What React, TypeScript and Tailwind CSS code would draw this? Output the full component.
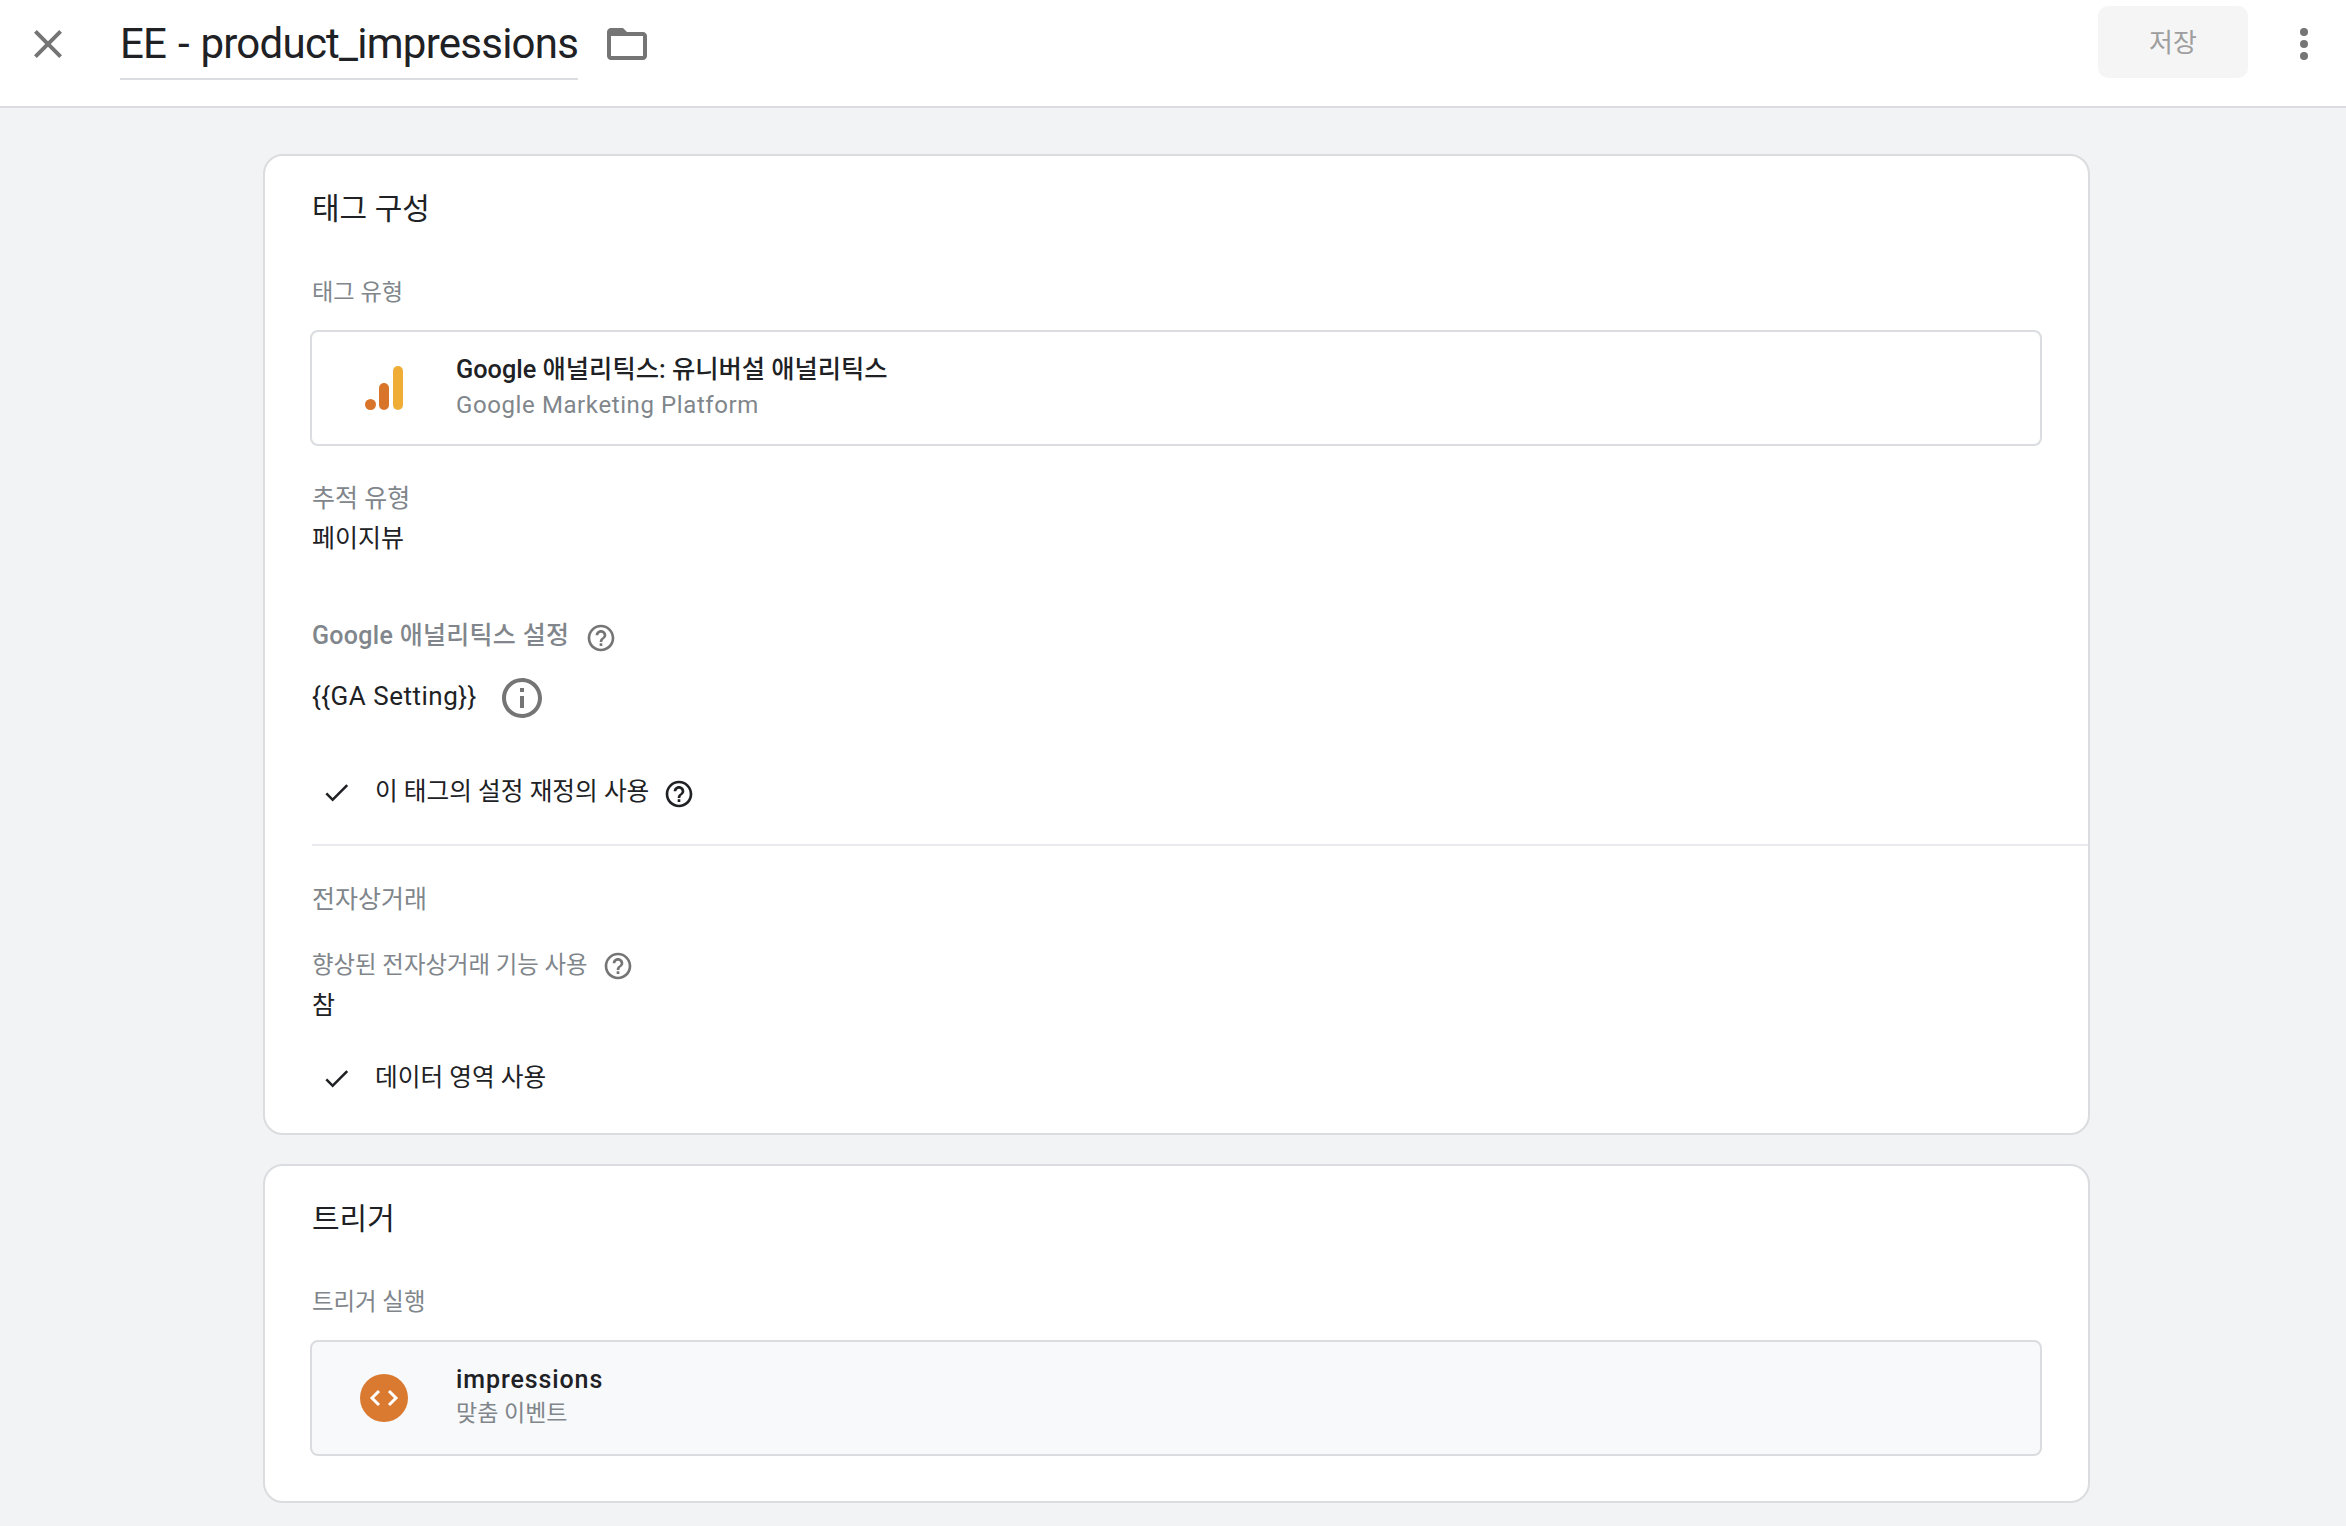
import type { ReactNode } from 'react'

const HELP = 'M11 18h2v-2h-2v2zm1-16C6.48 2 2 6.48 2 12s4.48 10 10 10 10-4.48 10-10S17.52 2 12 2zm0 18c-4.41 0-8-3.59-8-8s3.59-8 8-8 8 3.59 8 8-3.59 8-8 8zm0-14c-2.21 0-4 1.79-4 4h2c0-1.1.9-2 2-2s2 .9 2 2c0 2-3 1.75-3 5h2c0-2.25 3-2.5 3-5 0-2.21-1.79-4-4-4z'
const INFO = 'M11 7h2v2h-2zm0 4h2v6h-2zm1-9C6.48 2 2 6.48 2 12s4.48 10 10 10 10-4.48 10-10S17.52 2 12 2zm0 18c-4.41 0-8-3.59-8-8s3.59-8 8-8 8 3.59 8 8-3.59 8-8 8z'
const CLOSE = 'M19 6.41L17.59 5 12 10.59 6.41 5 5 6.41 10.59 12 5 17.59 6.41 19 12 13.41 17.59 19 19 17.59 13.41 12z'
const FOLDER = 'M20 6h-8l-2-2H4c-1.1 0-2 .9-2 2v12c0 1.1.9 2 2 2h16c1.1 0 2-.9 2-2V8c0-1.1-.9-2-2-2zm0 12H4V8h16v10z'
const CHECK = 'M9 16.17L4.83 12l-1.41 1.41L9 19 21 7l-1.41-1.41z'

function Icon({ d, className }: { d: string; className: string }) {
  return (
    <svg viewBox="0 0 24 24" fill="currentColor" className={className}>
      <path d={d} />
    </svg>
  )
}

function Label({ children, className }: { children: ReactNode; className: string }) {
  return <div className={`h-[30px] flex items-center text-[#80868b] ${className}`}>{children}</div>
}

function Value({ children, className }: { children: ReactNode; className: string }) {
  return <div className={`h-[30px] flex items-center text-[25px] text-[#202124] ${className}`}>{children}</div>
}

function CardTitle({ children }: { children: ReactNode }) {
  return <div className="h-[40px] flex items-center text-[30px] text-[#202124]">{children}</div>
}

function CheckRow({ children, className }: { children: ReactNode; className: string }) {
  return (
    <div className={`h-[40px] flex items-center text-[24.7px] text-[#202124] ${className}`}>
      <Icon d={CHECK} className="w-[31px] h-[31px] ml-[9px] mr-[23px] shrink-0 text-[#202124]" />
      {children}
    </div>
  )
}

function Box({ icon, title, sub, className, bodyClass, titleClass, subClass }: { icon: ReactNode; title: string; sub: string; className: string; bodyClass: string; titleClass: string; subClass: string }) {
  return (
    <div className={`h-[116px] ml-[-2px] rounded-[8px] border-2 border-[#dadce0] flex items-center ${className}`}>
      <div className="w-[144px] flex justify-center shrink-0">{icon}</div>
      <div className={`flex flex-col ${bodyClass}`}>
        <div className={`h-[34px] flex items-center font-medium text-[#202124] ${titleClass}`}>{title}</div>
        <div className={`h-[32px] flex items-center text-[#80868b] ${subClass}`}>{sub}</div>
      </div>
    </div>
  )
}

export default function App() {
  return (
    <div className="min-h-[1526px] bg-[#f1f3f4] font-[Roboto,'Noto_Sans_CJK_KR',sans-serif] overflow-hidden">
      <header className="h-[108px] bg-white border-b-2 border-[#dadce0] flex items-center pb-[18px]">
        <Icon d={CLOSE} className="w-[48px] h-[48px] ml-[24px] mr-[48px] text-[#757575] shrink-0" />
        <div className="h-[72px] border-b-2 border-[#dadce0] flex items-center text-[42px] tracking-[-0.75px] [word-spacing:2px] text-[#202124]">
          EE - product_impressions
        </div>
        <Icon d={FOLDER} className="w-[48px] h-[48px] ml-[25px] text-[#757575] shrink-0" />
        <div className="ml-auto mb-[4px] pt-[3px] w-[150px] h-[72px] rounded-[10px] bg-[#f5f5f5] flex items-center justify-center text-[26px] text-[#9e9e9e]">
          저장
        </div>
        <div className="w-[98px] pl-[14px] flex flex-col items-center gap-[4px]">
          <span className="w-[8px] h-[8px] rounded-full bg-[#757575]" />
          <span className="w-[8px] h-[8px] rounded-full bg-[#757575]" />
          <span className="w-[8px] h-[8px] rounded-full bg-[#757575]" />
        </div>
      </header>

      <main className="ml-[263px] w-[1827px] pt-[46px]">
        <section className="h-[981px] bg-white border-2 border-[#dadce0] rounded-[20px] pl-[47px] pr-[46px] pt-[32px]">
          <CardTitle>태그 구성</CardTitle>
          <Label className="mt-[49px] text-[23.2px]">태그 유형</Label>
          <Box
            className="mt-[23px] bg-white"
            bodyClass="gap-[2px] mb-[2px]"
            titleClass="text-[25.3px]"
            subClass="text-[24px] tracking-[0.6px]"
            title="Google 애널리틱스: 유니버설 애널리틱스"
            sub="Google Marketing Platform"
            icon={
              <svg viewBox="0 0 38 44" className="w-[38px] h-[44px]">
                <circle cx="5.5" cy="38.5" r="5.5" fill="#d9752b" />
                <rect x="14" y="17" width="10" height="27" rx="5" fill="#d9752b" />
                <rect x="28" y="0" width="10" height="44" rx="5" fill="#f0ad36" />
              </svg>
            }
          />
          <Label className="mt-[38px] text-[25px]">추적 유형</Label>
          <Value className="mt-[10px]">페이지뷰</Value>
          <Label className="mt-[67px] text-[25px] tracking-[0.3px] font-medium">
            Google 애널리틱스 설정
            <Icon d={HELP} className="w-[32px] h-[32px] ml-[16px] mt-[3px] text-[#757575]" />
          </Label>
          <div className="mt-[27px] h-[40px] flex items-center text-[26px] tracking-[0.5px] text-[#202124]">
            <span className="mb-[3px]">{'{{GA Setting}}'}</span>
            <Icon d={INFO} className="w-[48px] h-[48px] ml-[21px] text-[#757575]" />
          </div>
          <CheckRow className="mt-[54px]">
            이 태그의 설정 재정의 사용
            <Icon d={HELP} className="w-[32px] h-[32px] ml-[14px] mt-[3px] text-[#202124]" />
          </CheckRow>
          <div className="mt-[32px] h-[2px] bg-[#e8eaed] mr-[-46px]" />
          <Label className="mt-[39px] text-[25px]">전자상거래</Label>
          <Label className="mt-[36px] text-[23.4px]">
            향상된 전자상거래 기능 사용
            <Icon d={HELP} className="w-[32px] h-[32px] ml-[14px] text-[#757575]" />
          </Label>
          <Value className="mt-[10px]">참</Value>
          <CheckRow className="mt-[37px]">데이터 영역 사용</CheckRow>
        </section>

        <section className="mt-[29px] h-[339px] bg-white border-2 border-[#dadce0] rounded-[20px] pl-[47px] pr-[46px] pt-[32px]">
          <CardTitle>트리거</CardTitle>
          <Label className="mt-[50px] text-[23.4px]">트리거 실행</Label>
          <Box
            className="mt-[22px] bg-[#f8f9fa]"
            bodyClass="gap-[1px] mb-[3px]"
            titleClass="text-[25px] tracking-[0.9px]"
            subClass="text-[23px]"
            title="impressions"
            sub="맞춤 이벤트"
            icon={
              <svg viewBox="0 0 48 48" className="w-[48px] h-[48px]">
                <circle cx="24" cy="24" r="24" fill="#d97a30" />
                <path d="M19 17l-7 7 7 7M29 17l7 7-7 7" fill="none" stroke="#fff" strokeWidth="3" />
              </svg>
            }
          />
        </section>
      </main>
    </div>
  )
}
